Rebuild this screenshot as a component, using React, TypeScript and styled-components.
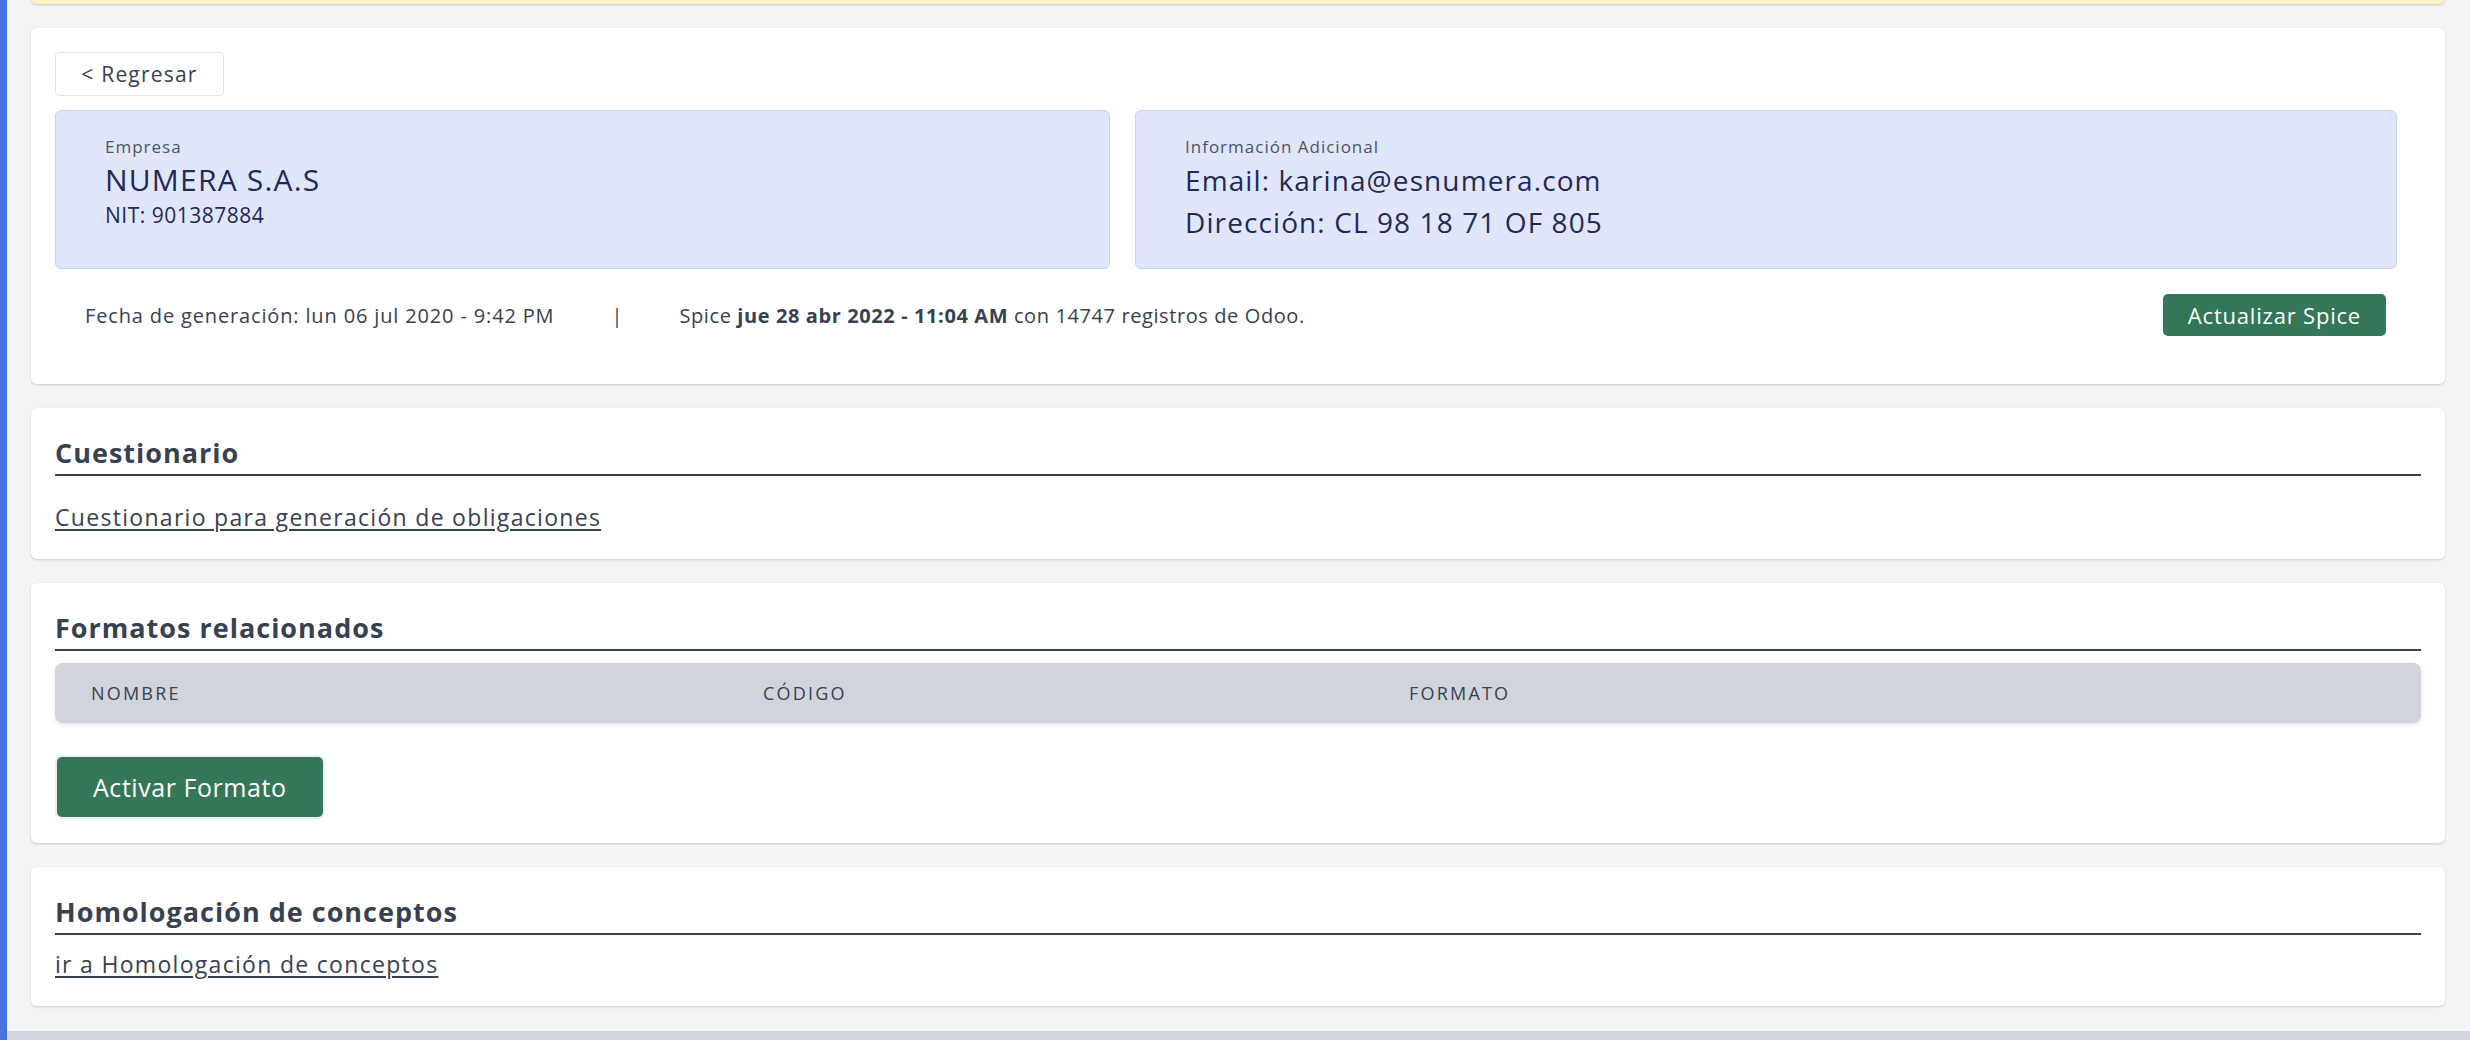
import React from "react";
import styled, { createGlobalStyle } from "styled-components";

const GlobalStyle = createGlobalStyle`
  html, body { margin: 0; padding: 0; }
  body {
    font-family: "Open Sans", Lato, "Liberation Sans", sans-serif;
    color: #374151;
    background: #f3f4f6;
  }
  * { box-sizing: border-box; }
`;

const Shell = styled.div`
  display: flex;
  height: 1040px;
  overflow: hidden;
`;

const Stripe = styled.div`
  width: 7px;
  flex: none;
  background: #4a72e2;
`;

const Main = styled.main`
  flex: 1;
  display: flex;
  flex-direction: column;
  background: #f3f4f6;
`;

const Content = styled.div`
  display: flex;
  flex-direction: column;
  gap: 24px;
  padding: 0 25px 0 24px;
`;

const Notice = styled.div`
  height: 60px;
  margin-top: -56px;
  background: #fef3c7;
  border-radius: 0 0 6px 6px;
  box-shadow: 0 1px 3px rgba(0, 0, 0, 0.12), 0 1px 2px rgba(0, 0, 0, 0.06);
`;

const Card = styled.section`
  background: #ffffff;
  border-radius: 6px;
  padding: 24px;
  box-shadow: 0 1px 3px rgba(0, 0, 0, 0.12), 0 1px 2px rgba(0, 0, 0, 0.06);
`;

const BackButton = styled.button`
  display: block;
  height: 44px;
  width: 169px;
  padding: 0;
  background: #fff;
  border: 1px solid #e2e4e8;
  border-radius: 4px;
  font-family: inherit;
  font-size: 21px;
  letter-spacing: 1.2px;
  color: #374151;
`;

const InfoGrid = styled.div`
  display: grid;
  grid-template-columns: 1055fr 1262fr;
  gap: 25px;
  margin: 14px 24px 0 0;
`;

const InfoBox = styled.div`
  background: #e0e7fc;
  border: 1px solid #c5d0fa;
  border-radius: 6px;
  padding: 24px 49px 25px;
  color: #24275a;
`;

const InfoLabel = styled.div`
  font-size: 17px;
  line-height: 24px;
  letter-spacing: 1px;
  color: #4b5563;
`;

const InfoTitle = styled.div`
  font-size: 30px;
  line-height: 42px;
  letter-spacing: 1.2px;
`;

const InfoSub = styled.div`
  font-size: 21px;
  line-height: 28px;
  letter-spacing: 0.5px;
`;

const InfoLine = styled.div`
  font-size: 28px;
  line-height: 42px;
  letter-spacing: 1.1px;
`;

const MetaRow = styled.div`
  display: flex;
  align-items: center;
  height: 42px;
  margin: 25px 0 24px;
  padding: 0 35px 0 30px;
  font-size: 20px;
  color: #374151;
`;

const MetaText = styled.span<{ $spacing: number }>`
  white-space: nowrap;
  letter-spacing: ${(p) => p.$spacing}px;
`;

const Divider = styled.span`
  margin: 0 57px 0 57px;
  color: #374151;
`;

const Spacer = styled.div`
  flex: 1;
`;

const GreenButton = styled.button<{ $big?: boolean }>`
  background: #347758;
  color: #fff;
  border: none;
  border-radius: 5px;
  font-family: inherit;
  font-size: ${(p) => (p.$big ? "25px" : "22px")};
  letter-spacing: ${(p) => (p.$big ? "0.55px" : "0.8px")};
  height: ${(p) => (p.$big ? "60px" : "42px")};
  padding: 0 ${(p) => (p.$big ? "36px" : "25px")};
  margin-left: ${(p) => (p.$big ? "2px" : "0")};
  box-shadow: ${(p) => (p.$big ? "0 0 0 2px #eceef1" : "none")};
  cursor: pointer;
`;

const SectionTitle = styled.h2`
  margin: 0;
  font-size: 27px;
  line-height: 42px;
  font-weight: 700;
  letter-spacing: 1px;
  color: #374151;
  border-bottom: 2px solid #374151;
`;

const SectionLink = styled.a<{ $gap: number }>`
  display: block;
  margin-top: ${(p) => p.$gap}px;
  font-size: 23px;
  line-height: 35px;
  letter-spacing: 1.3px;
  color: #374151;
  text-decoration: underline;
  text-underline-offset: 3px;
  width: fit-content;
`;

const TableHead = styled.div`
  display: grid;
  grid-template-columns: 672px 646px 1fr;
  align-items: center;
  height: 60px;
  margin-top: 12px;
  padding-left: 36px;
  background: #d1d5db;
  border-radius: 8px;
  box-shadow: 0 2px 4px rgba(0, 0, 0, 0.1);
`;

const HeadCell = styled.div`
  font-size: 18px;
  letter-spacing: 2.2px;
  text-transform: uppercase;
  color: #374151;
`;

const ButtonRow = styled.div`
  margin-top: 34px;
  padding-bottom: 2px;
`;

const Footer = styled.div`
  margin-top: 25px;
  height: 40px;
  background: #d1d5db;
`;

export default function App() {
  return (
    <>
      <GlobalStyle />
      <Shell>
        <Stripe />
        <Main>
          <Content>
            <Notice />
            <Card>
              <BackButton>&lt; Regresar</BackButton>
              <InfoGrid>
                <InfoBox>
                  <InfoLabel>Empresa</InfoLabel>
                  <InfoTitle>NUMERA S.A.S</InfoTitle>
                  <InfoSub>NIT: 901387884</InfoSub>
                </InfoBox>
                <InfoBox>
                  <InfoLabel>Información Adicional</InfoLabel>
                  <InfoLine>Email: karina@esnumera.com</InfoLine>
                  <InfoLine>Dirección: CL 98 18 71 OF 805</InfoLine>
                </InfoBox>
              </InfoGrid>
              <MetaRow>
                <MetaText $spacing={0.85}>Fecha de generación: lun 06 jul 2020 - 9:42 PM</MetaText>
                <Divider>|</Divider>
                <MetaText $spacing={0.6}>
                  Spice <b>jue 28 abr 2022 - 11:04 AM</b> con 14747 registros de Odoo.
                </MetaText>
                <Spacer />
                <GreenButton>Actualizar Spice</GreenButton>
              </MetaRow>
            </Card>
            <Card>
              <SectionTitle>Cuestionario</SectionTitle>
              <SectionLink $gap={24}>Cuestionario para generación de obligaciones</SectionLink>
            </Card>
            <Card>
              <SectionTitle>Formatos relacionados</SectionTitle>
              <TableHead>
                <HeadCell>Nombre</HeadCell>
                <HeadCell>Código</HeadCell>
                <HeadCell>Formato</HeadCell>
              </TableHead>
              <ButtonRow>
                <GreenButton $big>Activar Formato</GreenButton>
              </ButtonRow>
            </Card>
            <Card>
              <SectionTitle>Homologación de conceptos</SectionTitle>
              <SectionLink $gap={12}>ir a Homologación de conceptos</SectionLink>
            </Card>
          </Content>
          <Footer />
        </Main>
      </Shell>
    </>
  );
}
